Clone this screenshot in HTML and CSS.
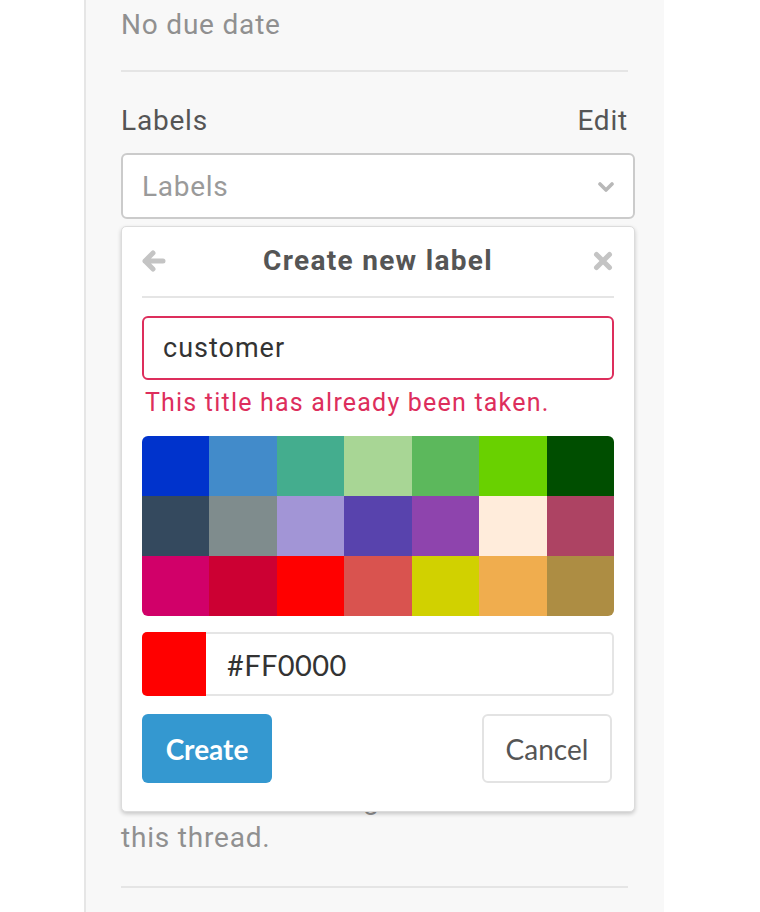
FILE: index.html
```html
<!DOCTYPE html>
<html lang="en">
<head>
<meta charset="utf-8">
<title>Create new label</title>
<link rel="stylesheet" href="styles.css">
</head>
<body>
<div class="page">
  <aside class="sidebar">
    <section class="block block-first">
      <div class="value">No due date</div>
    </section>
    <div class="divider"></div>

    <section class="block">
      <div class="title-row"><span>Labels</span><a class="edit-link">Edit</a></div>
      <div class="dropdown">
        <button class="dropdown-toggle" type="button">
          <span>Labels</span>
          <svg class="chevron" width="16" height="11" viewBox="0 0 16 11"><path d="M2 2 L8 8 L14 2" fill="none" stroke="#b8b8b8" stroke-width="3.6" stroke-linecap="round" stroke-linejoin="round"/></svg>
        </button>
        <div class="dropdown-menu">
          <div class="menu-header">
            <svg class="back-icon" width="24" height="22" viewBox="0 0 24 22"><path d="M11 3 L3 11 L11 19 M3 11 H21" fill="none" stroke="#c4c4c4" stroke-width="5" stroke-linecap="round" stroke-linejoin="round"/></svg>
            <span class="menu-title">Create new label</span>
            <svg class="close-icon" width="20" height="20" viewBox="0 0 20 20"><path d="M3.5 3.5 L16.5 16.5 M16.5 3.5 L3.5 16.5" fill="none" stroke="#c4c4c4" stroke-width="5" stroke-linecap="round"/></svg>
          </div>
          <input class="label-input" type="text" value="customer">
          <div class="error">This title has already been taken.</div>
          <div class="swatches">
            <span class="swatch" style="background:#0033CC"></span>
            <span class="swatch" style="background:#428BCA"></span>
            <span class="swatch" style="background:#44AD8E"></span>
            <span class="swatch" style="background:#A8D695"></span>
            <span class="swatch" style="background:#5CB85C"></span>
            <span class="swatch" style="background:#69D100"></span>
            <span class="swatch" style="background:#004E00"></span>
            <span class="swatch" style="background:#34495E"></span>
            <span class="swatch" style="background:#7F8C8D"></span>
            <span class="swatch" style="background:#A295D6"></span>
            <span class="swatch" style="background:#5843AD"></span>
            <span class="swatch" style="background:#8E44AD"></span>
            <span class="swatch" style="background:#FFECDB"></span>
            <span class="swatch" style="background:#AD4363"></span>
            <span class="swatch" style="background:#D10069"></span>
            <span class="swatch" style="background:#CC0033"></span>
            <span class="swatch" style="background:#FF0000"></span>
            <span class="swatch" style="background:#D9534F"></span>
            <span class="swatch" style="background:#D1D100"></span>
            <span class="swatch" style="background:#F0AD4E"></span>
            <span class="swatch" style="background:#AD8D43"></span>
          </div>
          <div class="color-row">
            <span class="color-preview" style="background:#FF0000"></span>
            <input class="color-input" type="text" value="#FF0000">
          </div>
          <div class="actions">
            <button class="btn btn-create" type="button">Create</button>
            <button class="btn btn-cancel" type="button">Cancel</button>
          </div>
        </div>
      </div>
    </section>
    <div class="divider"></div>

    <section class="block">
      <div class="title-row"><span>Confidentiality</span><a class="edit-link">Edit</a></div>
      <div class="value">Not confidential</div>
    </section>
    <div class="divider"></div>

    <section class="block">
      <div class="title-row"><span>Lock issue</span><a class="edit-link">Edit</a></div>
      <div class="value">Unlocked</div>
    </section>
    <div class="divider"></div>

    <section class="block">
      <div class="title-row"><span>1 participant</span></div>
      <div class="avatars"><span class="avatar"></span></div>
    </section>
    <div class="divider"></div>

    <section class="block block-notify">
      <div class="title-row"><span>Notifications</span><span class="toggle"></span></div>
      <div class="notify-text">You're not receiving notifications from<br>this thread.</div>
    </section>
    <div class="divider"></div>
  </aside>
</div>
</body>
</html>
```

FILE: styles.css
```css
* {
  box-sizing: border-box;
}

body {
  margin: 0;
  background: #ffffff;
  font-family: Roboto, "Liberation Sans", sans-serif;
  letter-spacing: 0.8px;
}

.page {
  display: flex;
  padding-left: 84px;
  min-height: 912px;
}

.sidebar {
  width: 580px;
  background: #f8f8f8;
  border-left: 2px solid #e6e6e6;
  padding-left: 35px;
}

.block {
  width: 514px;
  padding: 29px 0 26px;
}

.block-first {
  padding-top: 5px;
  padding-bottom: 25px;
}

.block-notify {
  padding-bottom: 29px;
}

.divider {
  width: 507px;
  height: 2px;
  background: #e5e5e5;
}

.title-row {
  width: 507px;
  display: flex;
  justify-content: space-between;
  align-items: center;
  height: 40px;
  font-size: 28px;
  line-height: 40px;
  color: #555555;
}

.edit-link {
  color: #555555;
}

.value {
  font-size: 28px;
  line-height: 40px;
  color: #909090;
}

.block .title-row + .value,
.block .title-row + .avatars,
.block .title-row + .notify-text {
  margin-top: 12px;
}

.avatars {
  height: 46px;
  display: flex;
}

.avatar {
  width: 46px;
  height: 46px;
  border-radius: 50%;
  background: #dddddd;
}

.toggle {
  width: 60px;
  height: 30px;
  border-radius: 15px;
  background: #dddddd;
}

.notify-text {
  font-size: 28px;
  line-height: 38px;
  color: #909090;
}

/* Labels dropdown */
.dropdown {
  position: relative;
  margin-top: 12px;
}

.dropdown-toggle {
  width: 514px;
  height: 66px;
  display: flex;
  align-items: center;
  justify-content: space-between;
  padding: 0 19px;
  background: #ffffff;
  border: 2px solid #cbcbcb;
  border-radius: 6px;
  font-family: Roboto, "Liberation Sans", sans-serif;
  font-size: 28px;
  letter-spacing: 0.7px;
  color: #9a9a9a;
}

.chevron {
  display: block;
  margin-top: 2px;
}

.dropdown-menu {
  position: absolute;
  top: calc(100% + 7px);
  left: 0;
  z-index: 10;
  width: 514px;
  padding: 0 20px 28px;
  background: #ffffff;
  border: 1px solid #dcdcdc;
  border-radius: 5px;
  box-shadow: 0 2px 4px rgba(0, 0, 0, 0.2);
}

.menu-header {
  display: grid;
  grid-template-columns: 30px 1fr 30px;
  align-items: center;
  padding: 14px 0 15px;
  border-bottom: 2px solid #e5e5e5;
}

.back-icon {
  display: block;
}

.close-icon {
  display: block;
  justify-self: end;
  margin-right: 1px;
}

.menu-title {
  text-align: center;
  font-size: 28px;
  line-height: 40px;
  font-weight: 700;
  letter-spacing: 1.3px;
  color: #555555;
}

.label-input {
  display: block;
  width: 100%;
  height: 64px;
  margin-top: 18px;
  padding: 0 19px;
  border: 2px solid #dd2e5c;
  border-radius: 6px;
  outline: none;
  font-family: Roboto, "Liberation Sans", sans-serif;
  font-size: 27px;
  letter-spacing: 1px;
  color: #333333;
}

.error {
  margin-top: 7px;
  padding-left: 3px;
  font-size: 25px;
  line-height: 32px;
  letter-spacing: 1.2px;
  color: #dd2e5c;
}

.swatches {
  margin-top: 17px;
  display: grid;
  grid-template-columns: repeat(7, 1fr);
  border-radius: 6px;
  overflow: hidden;
}

.swatch {
  height: 60px;
}

.color-row {
  margin-top: 16px;
  display: flex;
  height: 64px;
}

.color-preview {
  width: 64px;
  border-radius: 5px 0 0 5px;
}

.color-input {
  flex: 1;
  min-width: 0;
  padding-left: 21px;
  border: 2px solid #e5e5e5;
  border-left: none;
  border-radius: 0 5px 5px 0;
  outline: none;
  font-family: Lato, "Open Sans", sans-serif;
  font-size: 29px;
  letter-spacing: 0.4px;
  color: #333333;
}

.actions {
  margin-top: 18px;
  display: flex;
  justify-content: space-between;
}

.btn {
  width: 130px;
  height: 69px;
  border-radius: 6px;
  font-family: Lato, "Open Sans", sans-serif;
  font-size: 28px;
  letter-spacing: 0;
}

.btn-create {
  border: none;
  background: #3498d0;
  color: #ffffff;
  font-weight: 700;
}

.btn-cancel {
  margin-right: 2px;
  border: 2px solid #e3e3e3;
  background: #ffffff;
  color: #555555;
}
```
